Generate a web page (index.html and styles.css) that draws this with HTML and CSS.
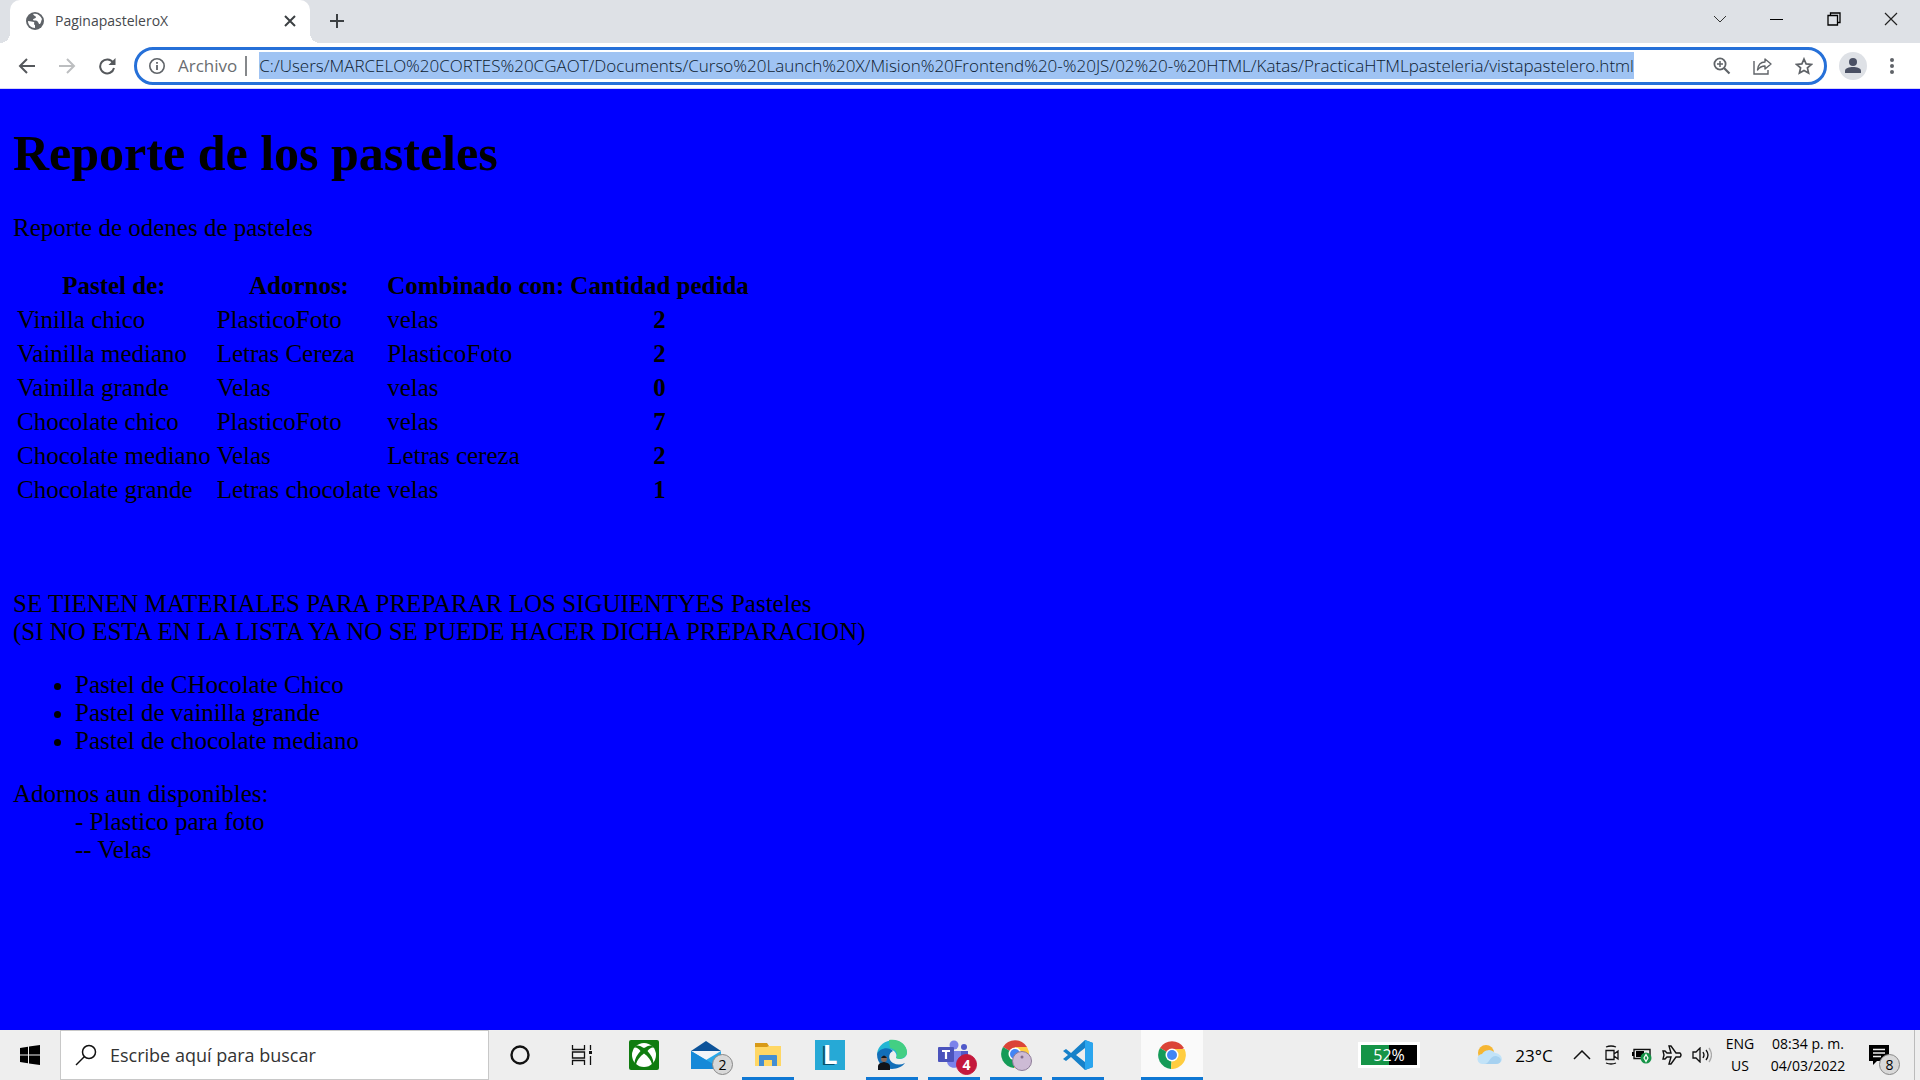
FILE: index.html
```html
<!DOCTYPE html>
<html lang="es">
<head>
<meta charset="utf-8">
<title>PaginapasteleroX</title>
<link rel="stylesheet" href="styles.css">
</head>
<body>
<header class="browser">
  <div class="tabstrip">
    <div class="tab">
      <svg class="tab-icon" width="18" height="18" viewBox="0 0 18 18"><circle cx="9" cy="9" r="9" fill="#5f6368"/><path d="M2 9c3 0 4 1 6 1 1 1-1 2 1 3v3C5 16 2 13 2 9zM7 2c4-1 7 1 9 5-1 2-1 4-2 5-2 0-1-2-3-3-1-1-3 0-4-1 0-2 3-1 3-3 0-1-2-1-3-3z" fill="#fff"/></svg>
      <span class="tab-title">PaginapasteleroX</span>
      <button class="tab-close" aria-label="Cerrar pestaña"><svg width="12" height="12" viewBox="0 0 12 12"><path d="M1 1l10 10M11 1L1 11" stroke="#3c4043" stroke-width="2"/></svg></button>
    </div>
    <button class="new-tab" aria-label="Nueva pestaña"><svg width="16" height="16" viewBox="0 0 16 16"><path d="M8 1v14M1 8h14" stroke="#3c4043" stroke-width="2"/></svg></button>
    <div class="window-controls">
      <button class="window-btn" aria-label="Buscar pestañas"><svg width="14" height="14" viewBox="0 0 14 14"><path d="M1 4l6 6 6-6" fill="none" stroke="#333"/></svg></button>
      <button class="window-btn" aria-label="Minimizar"><svg width="14" height="14" viewBox="0 0 14 14"><path d="M0 7.500h13" stroke="#000"/></svg></button>
      <button class="window-btn" aria-label="Restaurar"><svg width="14" height="14" viewBox="0 0 14 14"><path d="M1 3.500h9.500V13H1zM3.500 3V1H13v9.500h-2" fill="none" stroke="#000" stroke-width="1.300"/></svg></button>
      <button class="window-btn" aria-label="Cerrar"><svg width="14" height="14" viewBox="0 0 14 14"><path d="M1 1l12 12M13 1L1 13" stroke="#222" stroke-width="1.200"/></svg></button>
    </div>
  </div>
  <div class="toolbar">
    <button class="nav-btn" aria-label="Atrás"><svg width="18" height="18" viewBox="0 0 18 18"><path d="M17 9H2M9 2L2 9l7 7" fill="none" stroke="#55585c" stroke-width="2"/></svg></button>
    <button class="nav-btn" aria-label="Adelante"><svg width="18" height="18" viewBox="0 0 18 18"><path d="M1 9h15M9 2l7 7-7 7" fill="none" stroke="#bcbec0" stroke-width="2"/></svg></button>
    <button class="nav-btn" aria-label="Recargar"><svg width="18" height="18" viewBox="0 0 18 18"><path d="M15 5.500A7 7 0 1 0 16 11" fill="none" stroke="#55585c" stroke-width="2"/><path d="M17.500 1v7h-7z" fill="#55585c"/></svg></button>
    <div class="omnibox">
      <svg class="info" width="18" height="18" viewBox="0 0 18 18"><circle cx="9" cy="9" r="7.200" fill="none" stroke="#5f6368" stroke-width="1.600"/><path d="M9 8v5M9 5v1.800" stroke="#5f6368" stroke-width="1.800"/></svg>
      <label class="scheme" for="url">Archivo</label>
      <input class="url" id="url" type="text" value="C:/Users/MARCELO%20CORTES%20CGAOT/Documents/Curso%20Launch%20X/Mision%20Frontend%20-%20JS/02%20-%20HTML/Katas/PracticaHTMLpasteleria/vistapastelero.html">
      <div class="omni-actions">
        <button class="omni-btn" aria-label="Zoom"><svg width="18" height="18" viewBox="0 0 18 18"><circle cx="7" cy="7" r="5.600" fill="none" stroke="#5f6368" stroke-width="1.800"/><path d="M11 11l5.500 5.500" stroke="#5f6368" stroke-width="2.200"/><path d="M4 7h6M7 4v6" stroke="#5f6368" stroke-width="1.500"/></svg></button>
        <button class="omni-btn" aria-label="Compartir"><svg width="20" height="18" viewBox="0 0 20 18"><path d="M1 4v13h14v-4" fill="none" stroke="#5f6368" stroke-width="1.400"/><path d="M12 2l6 5-6 5V9C8 9 6 11 4.500 13 5 8 8 5 12 5z" fill="none" stroke="#5f6368" stroke-width="1.400" stroke-linejoin="round"/></svg></button>
        <button class="omni-btn" aria-label="Favorito"><svg width="18" height="18" viewBox="0 0 18 18"><path d="M9 2l2.100 4.900 5.300.500-4 3.500 1.200 5.200L9 13.400l-4.600 2.700 1.200-5.200-4-3.500 5.300-.500z" fill="none" stroke="#5f6368" stroke-width="1.700"/></svg></button>
      </div>
    </div>
    <button class="profile" aria-label="Perfil"><svg width="28" height="28" viewBox="0 0 28 28"><circle cx="14" cy="14" r="14" fill="#dee1e6"/><circle cx="14" cy="10" r="4" fill="#4a5064"/><path d="M6 21v-2c0-3 4-4 8-4s8 1 8 4v2z" fill="#4a5064"/></svg></button>
    <button class="menu" aria-label="Menú"><svg width="6" height="18" viewBox="0 0 6 18"><g fill="#5f6368"><circle cx="3" cy="3" r="2"/><circle cx="3" cy="9" r="2"/><circle cx="3" cy="15" r="2"/></g></svg></button>
  </div>
</header>

<main class="report">
  <h1 class="report-title">Reporte de los pasteles</h1>
  <p class="intro">Reporte de odenes de pasteles</p>
  <table class="orders">
    <thead><tr><th>Pastel de:</th><th>Adornos:</th><th>Combinado con:</th><th>Cantidad pedida</th></tr></thead>
    <tbody>
      <tr><td>Vinilla chico</td><td>PlasticoFoto</td><td>velas</td><th>2</th></tr>
      <tr><td>Vainilla mediano</td><td>Letras Cereza</td><td>PlasticoFoto</td><th>2</th></tr>
      <tr><td>Vainilla grande</td><td>Velas</td><td>velas</td><th>0</th></tr>
      <tr><td>Chocolate chico</td><td>PlasticoFoto</td><td>velas</td><th>7</th></tr>
      <tr><td>Chocolate mediano</td><td>Velas</td><td>Letras cereza</td><th>2</th></tr>
      <tr><td>Chocolate grande</td><td>Letras chocolate</td><td>velas</td><th>1</th></tr>
    </tbody>
  </table>
  <p class="materials">SE TIENEN MATERIALES PARA PREPARAR LOS SIGUIENTYES Pasteles<br>(SI NO ESTA EN LA LISTA YA NO SE PUEDE HACER DICHA PREPARACION)</p>
  <ul class="cakes">
    <li>Pastel de CHocolate Chico</li>
    <li>Pastel de vainilla grande</li>
    <li>Pastel de chocolate mediano</li>
  </ul>
  <dl class="decor">
    <dt>Adornos aun disponibles:</dt>
    <dd>- Plastico para foto</dd>
    <dd>-- Velas</dd>
  </dl>
</main>

<footer class="taskbar">
  <button class="start" aria-label="Inicio"><svg width="20" height="20" viewBox="0 0 20 20"><path d="M0 3l8-1.200V9.500H0zM9 1.600L20 0v9.500H9zM0 10.500h8v7.700L0 17zM9 10.500h11V20L9 18.400z"/></svg></button>
  <div class="search">
    <svg width="22" height="22" viewBox="0 0 22 22"><circle cx="14" cy="8" r="6.500" fill="none" stroke="#111" stroke-width="1.500"/><path d="M9.500 12.500L1 21" stroke="#111" stroke-width="1.500"/></svg>
    <input class="search-input" type="text" aria-label="Buscar" placeholder="Escribe aquí para buscar">
  </div>
  <nav class="apps">
    <button class="app" aria-label="Cortana"><svg width="22" height="22" viewBox="0 0 22 22"><circle cx="11" cy="11" r="8.500" fill="none" stroke="#111" stroke-width="2.400"/></svg></button>
    <button class="app" aria-label="Vista de tareas"><svg width="22" height="20" viewBox="0 0 22 20"><path d="M1.500 0v4.500h12V0M1.500 20v-4.500h12V20M1.500 7v6h12V7zM19.500 0v5M19.500 11v9" fill="none" stroke="#111" stroke-width="1.300"/><path d="M18 6h3v3h-3z" fill="#111"/></svg></button>
    <button class="app" aria-label="Xbox"><svg width="30" height="30" viewBox="0 0 30 30"><rect width="30" height="30" rx="2" fill="#107c10"/><circle cx="15" cy="15" r="12" fill="#fff"/><path d="M7 5.500c3-.500 5.500 1 8 2.500 2.500-1.500 5-3 8-2.500l1.500 2c-2-.500-4 1-6 3.500 3.500 4 6 8 6 12.500l-1.500 1C22 20 19 16.500 15 13.500 11 16.500 8 20 7 24.500l-1.500-1C5.500 19 8 15 11.500 11c-2-2.500-4-4-6-3.500z" fill="#107c10"/></svg></button>
    <button class="app" aria-label="Correo"><svg width="30" height="30" viewBox="0 0 30 30"><path d="M0 11L15 1l15 10z" fill="#0d5399"/><path d="M3 11h24v9H3z" fill="#f2f4f8"/><path d="M0 11l15 9 15-9v18H0z" fill="#28a8ea"/><path d="M0 29V11l17 10 13 8z" fill="#1689d8"/></svg><span class="badge">2</span></button>
    <button class="app running" aria-label="Explorador"><svg width="28" height="26" viewBox="0 0 28 26"><path d="M1 1h12l2 3v3H1z" fill="#d89a18"/><path d="M1 5h12l2-1h12v20H1z" fill="#ffd764"/><path d="M5 24V14q0-1 1-1h16q1 0 1 1v10h-5v-6h-8v6z" fill="#438ed3"/></svg></button>
    <button class="app" aria-label="L"><span class="letter-tile">L</span></button>
    <button class="app running" aria-label="Edge"><svg width="32" height="32" viewBox="0 0 32 32"><path d="M1 15C3-2 28-4 31 13c0 7-7 8-11 6 3-7-9-14-19-4z" fill="#23b6d3"/><path d="M13 1c10-2 18 5 18 12 0 6-7 8-11 6 3-5-1-9-6-10z" fill="#43cf83"/><path d="M1 15c2-6 12-8 16-3-5 2-5 9 0 12 4 2 8 2 12 0-6 9-28 9-28-9z" fill="#126eb8"/><circle cx="8" cy="20" r="3" fill="#8a6a5b"/><path d="M5 19q3-5 6 0zM2 31v-4q0-3 6-4 6 1 6 4v4z" fill="#111319"/></svg></button>
    <button class="app running" aria-label="Teams"><svg width="32" height="32" viewBox="0 0 32 32"><circle cx="16" cy="6" r="4.500" fill="#7b83eb"/><circle cx="26" cy="8" r="3" fill="#5059c9"/><path d="M21 12h9v9q-2 5-9 3z" fill="#5059c9"/><path d="M9 12h14v10c0 9-14 9-14 0z" fill="#7b83eb"/><rect y="8" width="16" height="15" rx="1" fill="#4b53bc"/><path d="M4 12h8M8 12v8" stroke="#fff" stroke-width="2.200"/></svg><span class="badge badge-red">4</span></button>
    <button class="app running" aria-label="Chrome, perfil"><svg width="32" height="32" viewBox="0 0 32 32"><path d="M15 15L3 8a14 14 0 0 1 24 0z" fill="#db4437"/><path d="M15 15L3 8a14 14 0 0 0 11 21z" fill="#159b58"/><path d="M15 15l-1 14A14 14 0 0 0 27 8H15z" fill="#ffcd40"/><circle cx="15" cy="15" r="6.500" fill="#fff"/><circle cx="15" cy="15" r="5" fill="#4285f4"/><circle cx="22" cy="22" r="9.500" fill="#cdbbd5" stroke="#8d7b98"/><circle cx="22" cy="18" r="1.500" fill="#806c8c"/></svg></button>
    <button class="app running" aria-label="Visual Studio Code"><svg width="30" height="30" viewBox="0 0 30 30"><path d="M22 0l8 3v24l-8 3L8 17l-5 4-3-2 5-4-5-4 3-2 5 4zM22 8l-9 7 9 7z" fill="#1681c9" fill-rule="evenodd"/><path d="M22 0l8 3v24l-8 3z" fill="#2aa5ee"/></svg></button>
    <button class="app running active" aria-label="Chrome"><svg width="28" height="28" viewBox="0 0 28 28"><path d="M14 14L2 7a14 14 0 0 1 24 0z" fill="#db4437"/><path d="M14 14L2 7a14 14 0 0 0 11 21z" fill="#159b58"/><path d="M14 14l-1 14A14 14 0 0 0 26.500 8H14z" fill="#ffcd40"/><circle cx="14" cy="14" r="6.500" fill="#fff"/><circle cx="14" cy="14" r="5" fill="#4285f4"/></svg></button>
  </nav>
  <div class="tray">
    <div class="battery-meter">52%</div>
    <button class="weather"><svg width="26" height="22" viewBox="0 0 26 22"><circle cx="9" cy="9" r="8" fill="#f6b632"/><path d="M6 20a5 5 0 0 1-1-10 8 8 0 0 1 13-1c9 1 9 11 1 11z" fill="#c2e3f8"/><path d="M7 20c6 0 5-8 12-8 7 1 6 8 0 8z" fill="#a6d1f0"/></svg><span>23°C</span></button>
    <button class="tray-btn" aria-label="Iconos ocultos"><svg width="18" height="10" viewBox="0 0 18 10"><path d="M1 9l8-8 8 8" fill="none" stroke="#111" stroke-width="1.500"/></svg></button>
    <button class="tray-btn" aria-label="Cámara"><svg width="16" height="20" viewBox="0 0 16 20"><path d="M2 5.500h8v9H2zM10 9l4-3v8l-4-3M2 2q5-2 10 0M2 18q5 2 10 0" fill="none" stroke="#111" stroke-width="1.300"/></svg></button>
    <button class="tray-btn" aria-label="Batería"><svg width="20" height="18" viewBox="0 0 20 18"><path d="M2 3.500h16v9H2z" fill="none" stroke="#111" stroke-width="1.400"/><path d="M4 5h8v6H4zM0 6h2v4H0z"/><circle cx="14" cy="12" r="5.500" fill="#159447"/><path d="M14 8.500l2 3.500-2 3.500-2-3.500z" fill="none" stroke="#fff" stroke-width="1.200"/></svg></button>
    <button class="tray-btn" aria-label="Modo avión"><svg width="20" height="20" viewBox="0 0 20 20"><path d="M7 1h2l5 7h4q2 2 0 4h-4l-5 7H7l2-7H5l-2 2H1l1-4-1-4h2l2 2h4z" fill="none" stroke="#111" stroke-width="1.400"/></svg></button>
    <button class="tray-btn" aria-label="Volumen"><svg width="20" height="16" viewBox="0 0 20 16"><path d="M1 5h3l4-4v14l-4-4H1z" fill="none" stroke="#111" stroke-width="1.300"/><path d="M11 5q2 3 0 6M14 3q4 5 0 10" fill="none" stroke="#111" stroke-width="1.300"/><path d="M17 1q5 7 0 14" fill="none" stroke="#aaa" stroke-width="1.300"/></svg></button>
    <button class="language">ENG<br>US</button>
    <button class="clock">08:34 p. m.<br>04/03/2022</button>
    <button class="notices" aria-label="Notificaciones"><svg width="20" height="20" viewBox="0 0 20 20"><path d="M0 0h20v16H8l-4 4v-4H0z"/><path d="M4 4.500h12M4 8h12M4 11.500h8" stroke="#eee" stroke-width="1.300"/></svg><span class="badge">8</span></button>
    <button class="show-desktop" aria-label="Mostrar escritorio"></button>
  </div>
</footer>
</body>
</html>
```
FILE: styles.css
```css
* { box-sizing: border-box; }
body {
  margin: 0;
  min-height: 100vh;
  display: flex;
  flex-direction: column;
  background: #0000ff;
  color: #000;
  font-family: "Open Sans", "Noto Sans", sans-serif;
}
button {
  border: 0;
  padding: 0;
  background: none;
  color: inherit;
  font: inherit;
  display: flex;
  align-items: center;
  justify-content: center;
}
svg { display: block; flex: none; }
input { border: 0; outline: 0; padding: 0; font: inherit; }

/* browser chrome */
.browser { background: #fff; border-bottom: 1px solid #d5d5f5; }
.tabstrip { display: flex; height: 43px; background: #dee1e6; padding-left: 10px; }
.tab {
  position: relative;
  display: flex;
  align-items: center;
  width: 300px;
  padding: 0 14px 2px 16px;
  background: #fff;
  border-radius: 10px 10px 0 0;
}
.tab::before, .tab::after {
  content: "";
  position: absolute;
  bottom: 0;
  width: 10px;
  height: 10px;
}
.tab::before { right: 100%; background: radial-gradient(circle at 0 0, transparent 10px, #fff 10px); }
.tab::after { left: 100%; background: radial-gradient(circle at 100% 0, transparent 10px, #fff 10px); }
.tab-title { flex: 1; margin-left: 11px; font-size: 14px; color: #45484c; }
.new-tab { width: 54px; height: 41px; }
.window-controls { display: flex; margin-left: auto; padding-right: 1px; height: 38px; }
.window-btn { width: 57px; }
.toolbar { display: flex; align-items: center; height: 45px; padding: 0 16px 0 7px; }
.nav-btn { width: 40px; height: 40px; }
.omnibox {
  flex: 1;
  display: flex;
  align-items: center;
  height: 38px;
  margin-left: 7px;
  padding: 0 0 0 11px;
  border: 3px solid #2670d8;
  border-radius: 19px;
  font-size: 17px;
}
.scheme { margin-left: 12px; padding-right: 8px; color: #6a6d71; line-height: 20px; border-right: 2px solid #85888b; }
.url {
  flex: 0 1 auto;
  field-sizing: content;
  height: 27px;
  margin-left: 12px;
  background: #9fc3f3;
  color: #0c1b30;
  font-weight: 300;
}
.omni-actions { display: flex; margin-left: auto; }
.omni-btn { width: 41px; height: 30px; }
.profile { width: 28px; margin-left: 12px; }
.menu { width: 24px; margin-left: 13px; }

/* report */
.report {
  flex: 1;
  padding: 35px 13px 25px;
  font: 25px/28px "Liberation Serif", "Times New Roman", serif;
}
.report-title { margin: 0 0 32px; font-size: 50px; line-height: 58px; }
.intro { margin: 0 0 26px; }
.orders { border-spacing: 2px; }
.orders th, .orders td { padding: 2px; text-align: left; white-space: nowrap; }
.orders th { text-align: center; }
.materials { margin: 82px 0 25px; }
.cakes { margin: 0 0 25px; padding-left: 62px; }
.decor { margin: 0; }
.decor dd { margin-left: 62px; }

/* taskbar */
.taskbar { display: flex; height: 50px; background: #eee; }
.start { width: 60px; }
.search {
  display: flex;
  align-items: center;
  width: 429px;
  padding-left: 14px;
  border: 1px solid #c8c8c8;
  background: #fff;
}
.search-input { flex: 1; min-width: 0; margin-left: 13px; font-size: 18px; }
.search-input::placeholder { color: #333; opacity: 1; }
.apps { display: flex; }
.app { position: relative; width: 62px; }
.running::after {
  content: "";
  position: absolute;
  bottom: 0;
  left: 5px;
  right: 5px;
  height: 3px;
  background: #0f78d4;
}
.active { margin-left: 32px; background: #fafafa; }
.active::after { left: 0; right: 0; }
.badge {
  position: absolute;
  right: 4px;
  bottom: 5px;
  width: 21px;
  height: 21px;
  border: 1px solid #888;
  border-radius: 50%;
  background: #d8d8d8;
  font-size: 14px;
  line-height: 19px;
  text-align: center;
}
.badge-red { right: 8px; border-color: #c4183c; background: #c4183c; color: #fff; font-weight: 700; }
.letter-tile {
  width: 30px;
  height: 30px;
  background: #26a9d6;
  color: #fff;
  font-size: 26px;
  font-weight: 700;
  line-height: 28px;
  text-shadow: -2px 1px #07516e;
}
.tray { display: flex; align-items: center; margin-left: auto; font-size: 14px; }
.tray > button { height: 50px; }
.battery-meter {
  width: 62px;
  border: 3px solid #fff;
  background: linear-gradient(90deg, #159447 50%, #000 50%);
  color: #fff;
  font-size: 16px;
  line-height: 20px;
  text-align: center;
}
.tray .weather { width: 90px; margin: 0 7px 0 50px; gap: 12px; font-size: 17px; }
.tray-btn { width: 30px; }
.language { width: 46px; line-height: 22px; }
.clock { width: 90px; line-height: 22px; }
.notices { position: relative; width: 61px; padding-right: 10px; }
.notices .badge { right: 14px; }
.show-desktop { width: 6px; border-left: 1px solid #bbb; }
```
